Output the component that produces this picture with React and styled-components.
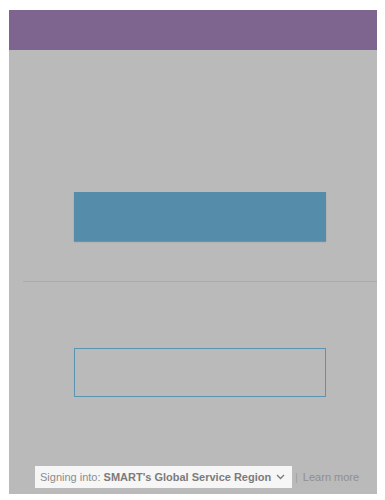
import React from "react";
import styled, { createGlobalStyle } from "styled-components";

const GlobalStyle = createGlobalStyle`
  html, body {
    margin: 0;
    padding: 0;
    background: #ffffff;
    font-family: "Liberation Sans", Arial, sans-serif;
  }
`;

const Page = styled.div`
  padding: 10px 8px 6px 9px;
`;

const Panel = styled.div`
  width: 368px;
  height: 484px;
  background: #bababa;
  display: flex;
  flex-direction: column;
`;

const Header = styled.div`
  height: 40px;
  background: #7d6590;
  flex-shrink: 0;
`;

const Body = styled.div`
  flex: 1;
  display: flex;
  flex-direction: column;
`;

const Block = styled.div`
  padding-left: 65px;
  padding-top: ${(p) => p.top}px;
`;

const PrimaryButton = styled.div`
  width: 252px;
  height: 49px;
  background: #548ca9;
  box-shadow: 0 1px 1px rgba(0, 0, 0, 0.25);
`;

const OutlineButton = styled.div`
  width: 250px;
  height: 47px;
  border: 1px solid #5b93b3;
`;

const Divider = styled.div`
  margin-top: 40px;
  margin-left: 14px;
  height: 1px;
  background: #ababab;
`;

const Footer = styled.div`
  margin-top: auto;
  margin-bottom: 6px;
  padding-left: 26px;
  display: flex;
  align-items: center;
  font-size: 11px;
  color: #8c8c8c;
`;

const RegionBox = styled.div`
  height: 22px;
  width: 257px;
  box-sizing: border-box;
  background: #f6f6f6;
  display: flex;
  align-items: center;
  padding-left: 5px;
  white-space: nowrap;
`;

const Region = styled.span`
  font-weight: bold;
  color: #7b7b7b;
  margin-left: 3px;
`;

const Chevron = styled.svg`
  margin-left: 5px;
  width: 9px;
  height: 6px;
`;

const Sep = styled.span`
  margin: 0 5px 0 3px;
  color: #a0a0a0;
`;

const Learn = styled.span`
  color: #8f8f8f;
`;

export default function App() {
  return (
    <>
      <GlobalStyle />
      <Page>
        <Panel>
          <Header />
          <Body>
            <Block top={142}>
              <PrimaryButton />
            </Block>
            <Divider />
            <Block top={66}>
              <OutlineButton />
            </Block>
            <Footer>
              <RegionBox>
                Signing into:<Region>SMART's Global Service Region</Region>
                <Chevron viewBox="0 0 9 6">
                  <path d="M1 1l3.5 3.5L8 1" fill="none" stroke="#7b7b7b" strokeWidth="1.4" />
                </Chevron>
              </RegionBox>
              <Sep>|</Sep>
              <Learn>Learn more</Learn>
            </Footer>
          </Body>
        </Panel>
      </Page>
    </>
  );
}
